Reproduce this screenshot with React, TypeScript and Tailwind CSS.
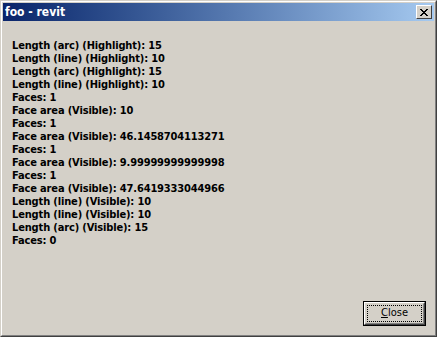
const lines = [
  "Length (arc) (Highlight): 15",
  "Length (line) (Highlight): 10",
  "Length (arc) (Highlight): 15",
  "Length (line) (Highlight): 10",
  "Faces: 1",
  "Face area (Visible): 10",
  "Faces: 1",
  "Face area (Visible): 46.1458704113271",
  "Faces: 1",
  "Face area (Visible): 9.99999999999998",
  "Faces: 1",
  "Face area (Visible): 47.6419333044966",
  "Length (line) (Visible): 10",
  "Length (line) (Visible): 10",
  "Length (arc) (Visible): 15",
  "Faces: 0",
];

const font = { fontFamily: "Tahoma, 'DejaVu Sans Condensed', 'Liberation Sans', sans-serif" };

export default function App() {
  return (
    <div
      className="w-[437px] h-[337px] bg-[#d4d0c8] border border-t-[#d4d0c8] border-l-[#d4d0c8] border-r-[#404040] border-b-[#404040]"
      style={font}
    >
      <div className="w-full h-full flex flex-col border border-t-white border-l-white border-r-[#808080] border-b-[#808080] p-px">
        {/* title bar */}
        <div className="h-[18px] flex items-center justify-between pl-[2px] pr-[2px] bg-gradient-to-r from-[#0a246a] to-[#a6caf0]">
          <span className="text-white font-bold text-[12px] leading-none">foo - revit</span>
          <div className="w-4 h-[14px] bg-[#d4d0c8] border border-t-white border-l-white border-r-[#404040] border-b-[#404040] flex items-center justify-center">
            <svg width="8" height="7" viewBox="0 0 8 7" shapeRendering="crispEdges">
              <path d="M0 0h2v1H0zM6 0h2v1H6zM1 1h2v1H1zM5 1h2v1H5zM2 2h4v1H2zM3 3h2v1H3zM2 4h4v1H2zM1 5h2v1H1zM5 5h2v1H5zM0 6h2v1H0zM6 6h2v1H6z" fill="#000" />
            </svg>
          </div>
        </div>
        {/* body */}
        <div className="flex-1 flex flex-col pl-[9px] pr-2 pt-[18px] pb-2">
          <div className="flex-1">
            {lines.map((l, i) => (
              <div key={i} className="text-[11px] leading-[13px] font-bold text-black whitespace-nowrap tracking-[-0.15px]">
                {l}
              </div>
            ))}
          </div>
          <div className="flex justify-end">
            <button className="w-[63px] h-[25px] border border-black bg-[#d4d0c8] p-0">
              <div className="w-full h-full border border-t-white border-l-white border-r-[#404040] border-b-[#404040]">
                <div className="w-full h-full border border-r-[#808080] border-b-[#808080] border-t-transparent border-l-transparent flex items-center justify-center p-[1px]">
                  <div className="w-full h-full border border-dotted border-black flex items-center justify-center text-[11px] text-black">
                    <span><span className="underline">C</span>lose</span>
                  </div>
                </div>
              </div>
            </button>
          </div>
        </div>
      </div>
    </div>
  );
}
